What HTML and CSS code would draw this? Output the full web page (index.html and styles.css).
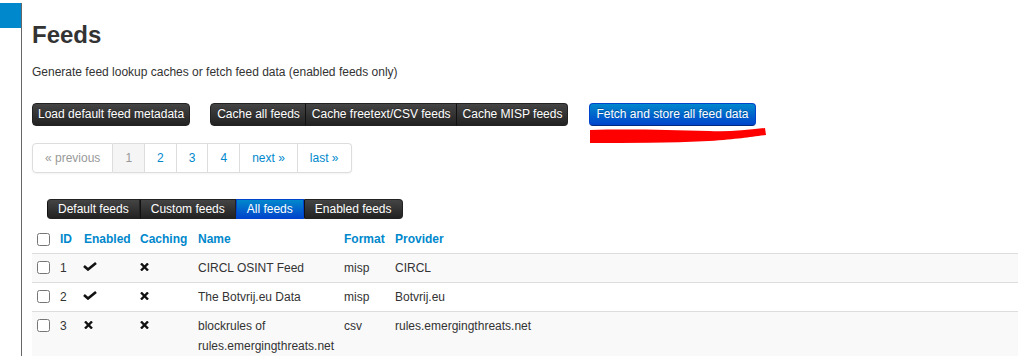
FILE: index.html
```html
<!DOCTYPE html>
<html lang="en">
<head>
    <meta charset="UTF-8">
    <meta name="viewport" content="width=device-width, initial-scale=1.0">
    <title>Feeds</title>
    <link rel="stylesheet" href="styles.css">
</head>
<body>
    <div class="page">
        <div class="side">
            <div class="side-tab"></div>
        </div>

        <div class="main">
            <h2>Feeds</h2>
            <p class="intro">Generate feed lookup caches or fetch feed data (enabled feeds only)</p>

            <div class="actions">
                <button class="btn btn-dark">Load default feed metadata</button>
                <div class="btn-group">
                    <button class="btn btn-dark">Cache all feeds</button>
                    <button class="btn btn-dark">Cache freetext/CSV feeds</button>
                    <button class="btn btn-dark">Cache MISP feeds</button>
                </div>
                <div class="marked">
                    <button class="btn btn-blue">Fetch and store all feed data</button>
                    <!-- red marker scribble -->
                    <svg class="scribble" width="178" height="16" viewBox="0 0 178 16">
                        <path d="M1,2 C40,1 80,2 120,3 C140,4 156,2 176,0 L177,7 C160,9 150,11 120,13 C80,15 40,15 1,15 Z" fill="#f00"/>
                    </svg>
                </div>
            </div>

            <ul class="pagination">
                <li class="disabled">« previous</li>
                <li class="active">1</li>
                <li><a href="#">2</a></li>
                <li><a href="#">3</a></li>
                <li><a href="#">4</a></li>
                <li><a href="#">next »</a></li>
                <li><a href="#">last »</a></li>
            </ul>

            <div class="tabs">
                <button class="tab">Default feeds</button>
                <button class="tab">Custom feeds</button>
                <button class="tab tab-active">All feeds</button>
                <button class="tab">Enabled feeds</button>
            </div>

            <table class="feeds">
                <thead>
                    <tr>
                        <th class="c-cb"><input type="checkbox"></th>
                        <th class="c-id"><a href="#">ID</a></th>
                        <th class="c-en"><a href="#">Enabled</a></th>
                        <th class="c-ca"><a href="#">Caching</a></th>
                        <th class="c-name"><a href="#">Name</a></th>
                        <th class="c-fmt"><a href="#">Format</a></th>
                        <th><a href="#">Provider</a></th>
                    </tr>
                </thead>
                <tbody>
                    <tr>
                        <td><input type="checkbox"></td>
                        <td>1</td>
                        <td><svg class="ico-ok" width="14" height="9" viewBox="0 0 14 9"><path d="M1,4 L5,7.5 L13,1" fill="none" stroke="#111" stroke-width="2.6"/></svg></td>
                        <td><svg class="ico-no" width="9" height="8" viewBox="0 0 9 8"><path d="M1,0.5 L8,7.5 M8,0.5 L1,7.5" fill="none" stroke="#111" stroke-width="2.4"/></svg></td>
                        <td>CIRCL OSINT Feed</td>
                        <td>misp</td>
                        <td>CIRCL</td>
                    </tr>
                    <tr>
                        <td><input type="checkbox"></td>
                        <td>2</td>
                        <td><svg class="ico-ok" width="14" height="9" viewBox="0 0 14 9"><path d="M1,4 L5,7.5 L13,1" fill="none" stroke="#111" stroke-width="2.6"/></svg></td>
                        <td><svg class="ico-no" width="9" height="8" viewBox="0 0 9 8"><path d="M1,0.5 L8,7.5 M8,0.5 L1,7.5" fill="none" stroke="#111" stroke-width="2.4"/></svg></td>
                        <td>The Botvrij.eu Data</td>
                        <td>misp</td>
                        <td>Botvrij.eu</td>
                    </tr>
                    <tr>
                        <td><input type="checkbox"></td>
                        <td>3</td>
                        <td><svg class="ico-no" width="9" height="8" viewBox="0 0 9 8"><path d="M1,0.5 L8,7.5 M8,0.5 L1,7.5" fill="none" stroke="#111" stroke-width="2.4"/></svg></td>
                        <td><svg class="ico-no" width="9" height="8" viewBox="0 0 9 8"><path d="M1,0.5 L8,7.5 M8,0.5 L1,7.5" fill="none" stroke="#111" stroke-width="2.4"/></svg></td>
                        <td>blockrules of rules.emergingthreats.net</td>
                        <td>csv</td>
                        <td>rules.emergingthreats.net</td>
                    </tr>
                </tbody>
            </table>
        </div>
    </div>
</body>
</html>
```

FILE: styles.css
```css
* {
    box-sizing: border-box;
}
html, body {
    margin: 0;
    overflow: hidden;
    background: #fff;
}
body {
    font-family: 'Liberation Sans', Arial, sans-serif;
    font-size: 12px;
    line-height: 20px;
    color: #333;
}
.page {
    display: flex;
    padding-top: 3px;
    min-height: 356px;
}
.side {
    width: 22px;
    border-right: 1px solid #666;
    flex-shrink: 0;
}
.side-tab {
    height: 25px;
    background: #0088cc;
}
.main {
    flex: 1;
    padding-left: 10px;
    min-width: 0;
}
h2 {
    margin: 17px 0 0;
    font-size: 24px;
    line-height: 30px;
    font-weight: bold;
    color: #333;
}
.intro {
    margin: 12px 0 21px;
}

/* buttons */
.actions {
    display: flex;
    gap: 20px;
    align-items: flex-start;
}
.btn {
    font-family: inherit;
    font-size: 12px;
    line-height: 17px;
    padding: 2px 5px;
    color: #fff;
    border: 1px solid #222;
    border-radius: 4px;
    cursor: pointer;
    text-shadow: 0 -1px 0 rgba(0,0,0,0.25);
}
.btn-dark {
    background: linear-gradient(#444, #222);
}
.btn-blue {
    background: linear-gradient(#0088cc, #0044cc);
    border-color: #0044cc #0044cc #002a80;
    padding: 2px 6px;
}
.btn-group {
    display: flex;
}
.btn-group .btn {
    border-radius: 0;
    padding: 2px 5px 2px 6px;
}
.btn-group .btn + .btn {
    margin-left: -1px;
    border-left-color: #111;
}
.btn-group .btn:first-child { border-radius: 4px 0 0 4px; }
.btn-group .btn:last-child { border-radius: 0 4px 4px 0; }
.marked {
    position: relative;
    margin-left: 1px;
}
.scribble {
    position: absolute;
    left: 0;
    top: 25px;
}

/* pagination */
.pagination {
    display: inline-flex;
    list-style: none;
    margin: 17px 0 0;
    padding: 0;
    border-radius: 4px;
    box-shadow: 0 1px 2px rgba(0,0,0,0.05);
}
.pagination li {
    padding: 4px 12px;
    border: 1px solid #ddd;
    border-left-width: 0;
    background: #fff;
    line-height: 20px;
}
.pagination li:first-child {
    border-left-width: 1px;
    border-radius: 4px 0 0 4px;
}
.pagination li:last-child {
    border-radius: 0 4px 4px 0;
}
.pagination a {
    color: #0088cc;
    text-decoration: none;
}
.pagination .disabled {
    color: #999;
}
.pagination .active {
    background: #f5f5f5;
    color: #999;
}

/* filter tabs */
.tabs {
    display: flex;
    margin: 26px 0 0 15px;
}
.tab {
    font-family: inherit;
    font-size: 12px;
    line-height: 18px;
    padding: 0 10px;
    color: #fff;
    background: linear-gradient(#444, #222);
    border: 1px solid #222;
    border-left-color: #111;
}
.tab:first-child { border-radius: 4px 0 0 4px; }
.tab:last-child { border-radius: 0 4px 4px 0; }
.tab-active {
    background: linear-gradient(#0088cc, #0044cc);
    border-color: #0044cc;
}

/* table */
.feeds {
    width: 100%;
    margin-top: 6px;
    border-collapse: collapse;
    table-layout: fixed;
}
.feeds th, .feeds td {
    padding: 4px 5px;
    text-align: left;
    vertical-align: top;
    box-sizing: content-box;
}
.feeds th {
    font-weight: bold;
}
.feeds th a {
    color: #0088cc;
    text-decoration: none;
}
.feeds td {
    border-top: 1px solid #ddd;
}
.feeds tbody tr:nth-child(odd) td {
    background: #f9f9f9;
}
.c-cb { width: 13px; }
.c-id { width: 14px; }
.c-en { width: 46px; }
.c-ca { width: 48px; }
.c-name { width: 136px; }
.c-fmt { width: 41px; }
.feeds input[type=checkbox] {
    margin: 3px 0 0;
    display: block;
    width: 13px;
    height: 13px;
}
.feeds th input[type=checkbox] {
    margin-top: 4px;
}
.ico-ok, .ico-no {
    vertical-align: 1px;
}
.ico-ok {
    margin-left: -1px;
}
```
